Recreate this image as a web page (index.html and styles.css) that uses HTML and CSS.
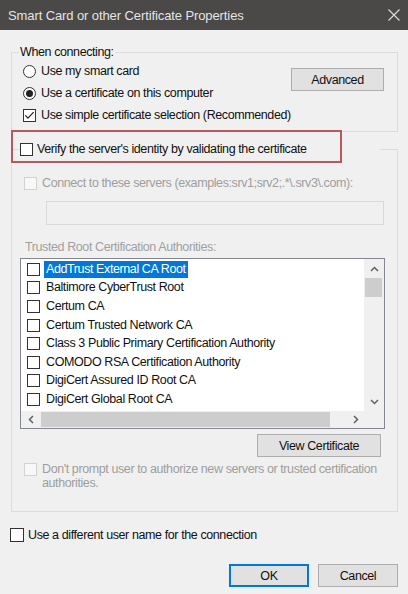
FILE: index.html
```html
<!DOCTYPE html>
<html>
  <head>
    <title>Smart Card or other Certificate Properties</title>
    <link rel="stylesheet" href="styles.css">
  </head>
  <body>
    <div class="dialog">
      <div class="title-bar">
        <span class="title-text">Smart Card or other Certificate Properties</span>
        <svg class="close-icon" viewBox="0 0 12 12" xmlns="http://www.w3.org/2000/svg">
          <path d="M0.5 0.5L11.5 11.5M11.5 0.5L0.5 11.5" />
        </svg>
      </div>

      <div class="dialog-body">
        <fieldset class="group connect-group">
          <legend class="group-label">When connecting:</legend>
          <div class="connect-row">
            <div class="connect-options">
              <div class="option"><span class="radio"></span>Use my smart card</div>
              <div class="option"><span class="radio checked"></span>Use a certificate on this computer</div>
              <div class="option">
                <span class="check">
                  <svg viewBox="0 0 13 13" xmlns="http://www.w3.org/2000/svg">
                    <path d="M2.3 6.3L5 9.2L10.6 3.2" />
                  </svg>
                </span>
                Use simple certificate selection (Recommended)
              </div>
            </div>
            <button class="win-button advanced-button">Advanced</button>
          </div>
        </fieldset>

        <fieldset class="group verify-group">
          <legend class="verify-legend">
            <span class="check"></span>
            <span class="verify-text">Verify the server's identity by validating the certificate</span>
            <span class="highlight-box"></span>
          </legend>

          <div class="option disabled servers-row">
            <span class="check"></span>
            Connect to these servers (examples:srv1;srv2;.*\.srv3\.com):
          </div>
          <div class="servers-input"></div>

          <div class="list-label">Trusted Root Certification Authorities:</div>
          <div class="ca-list">
            <div class="ca-items">
              <div class="ca-item"><span class="check"></span><span class="ca-name selected">AddTrust External CA Root</span></div>
              <div class="ca-item"><span class="check"></span><span class="ca-name">Baltimore CyberTrust Root</span></div>
              <div class="ca-item"><span class="check"></span><span class="ca-name">Certum CA</span></div>
              <div class="ca-item"><span class="check"></span><span class="ca-name">Certum Trusted Network CA</span></div>
              <div class="ca-item"><span class="check"></span><span class="ca-name">Class 3 Public Primary Certification Authority</span></div>
              <div class="ca-item"><span class="check"></span><span class="ca-name">COMODO RSA Certification Authority</span></div>
              <div class="ca-item"><span class="check"></span><span class="ca-name">DigiCert Assured ID Root CA</span></div>
              <div class="ca-item"><span class="check"></span><span class="ca-name">DigiCert Global Root CA</span></div>
            </div>
            <div class="v-scroll">
              <div class="scroll-arrow v-arrow">
                <svg viewBox="0 0 9 6" xmlns="http://www.w3.org/2000/svg"><path d="M1 5L4.5 1.5L8 5" /></svg>
              </div>
              <div class="v-thumb"></div>
              <div class="v-track"></div>
              <div class="scroll-arrow v-arrow">
                <svg viewBox="0 0 9 6" xmlns="http://www.w3.org/2000/svg"><path d="M1 1L4.5 4.5L8 1" /></svg>
              </div>
            </div>
            <div class="h-scroll">
              <div class="scroll-arrow h-arrow left-arrow">
                <svg viewBox="0 0 6 9" xmlns="http://www.w3.org/2000/svg"><path d="M5 1L1.5 4.5L5 8" /></svg>
              </div>
              <div class="h-thumb"></div>
              <div class="h-track"></div>
              <div class="scroll-arrow h-arrow right-arrow">
                <svg viewBox="0 0 6 9" xmlns="http://www.w3.org/2000/svg"><path d="M1 1L4.5 4.5L1 8" /></svg>
              </div>
            </div>
            <div class="scroll-corner"></div>
          </div>

          <div class="view-row">
            <button class="win-button view-button">View Certificate</button>
          </div>

          <div class="option disabled prompt-row">
            <span class="check"></span>
            <span class="prompt-text">Don't prompt user to authorize new servers or trusted certification authorities.</span>
          </div>
        </fieldset>

        <div class="option username-row">
          <span class="check"></span>
          Use a different user name for the connection
        </div>

        <div class="dialog-buttons">
          <button class="win-button ok-button">OK</button>
          <button class="win-button">Cancel</button>
        </div>
      </div>
    </div>
  </body>
</html>
```

FILE: styles.css
```css
body {
  margin: 0;
  width: 408px;
  height: 594px;
  overflow: hidden;
  background-color: #f0f0f0;
  font-family: "Liberation Sans", Arial, sans-serif;
  font-size: 12.5px;
  letter-spacing: -0.4px;
  color: #111111;
}
.dialog {
  display: flex;
  flex-direction: column;
  height: 594px;
}
.title-bar {
  height: 30px;
  flex-shrink: 0;
  display: flex;
  align-items: center;
  justify-content: space-between;
  padding: 0 8px;
  background-color: #4a4947;
}
.title-text {
  color: #e4e4e4;
  font-size: 13px;
  letter-spacing: -0.1px;
}
.close-icon {
  width: 12px;
  height: 12px;
  stroke: #dddddd;
  stroke-width: 1.1;
  fill: none;
}
.dialog-body {
  padding: 14px 10px 0 11px;
}

/* group boxes */
.group {
  margin: 0;
  border: 1px solid #dcdcdc;
  min-width: 0;
}
.connect-group {
  padding: 0 13px 5px 11px;
}
.group-label {
  margin-left: -4px;
  padding: 0 1px;
  line-height: 16px;
}
.connect-row {
  display: flex;
  justify-content: space-between;
  align-items: flex-start;
}
.option {
  display: flex;
  align-items: center;
  height: 22px;
  white-space: nowrap;
}
.radio {
  width: 13px;
  height: 13px;
  box-sizing: border-box;
  border: 1px solid #333333;
  border-radius: 50%;
  background-color: #ffffff;
  margin-right: 5px;
  display: flex;
  align-items: center;
  justify-content: center;
  flex-shrink: 0;
}
.radio.checked::after {
  content: "";
  width: 7px;
  height: 7px;
  border-radius: 50%;
  background-color: #222222;
}
.check {
  width: 13px;
  height: 13px;
  box-sizing: border-box;
  border: 1px solid #333333;
  background-color: #ffffff;
  margin-right: 5px;
  flex-shrink: 0;
  position: relative;
}
.check svg {
  position: absolute;
  left: -1px;
  top: -1px;
  width: 13px;
  height: 13px;
  fill: none;
  stroke: #222222;
  stroke-width: 1.2;
}
.win-button {
  height: 23px;
  padding: 0;
  font-family: inherit;
  font-size: 12.5px;
  letter-spacing: -0.4px;
  color: #111111;
  background-color: #e1e1e1;
  border: 1px solid #adadad;
  border-radius: 0;
}
.advanced-button {
  width: 93px;
  margin-top: 8px;
}

/* verify group */
.verify-group {
  margin-top: 8px;
  padding: 16px 12px 21px 8px;
}
.verify-legend {
  position: relative;
  display: flex;
  align-items: center;
  width: 360px;
  height: 18px;
  padding: 0;
}
.verify-legend .check {
  margin-right: 4px;
}
.verify-text {
  white-space: nowrap;
}
.highlight-box {
  position: absolute;
  left: -9px;
  top: -10px;
  width: 331px;
  height: 33px;
  box-sizing: border-box;
  border: 2px solid #b85a5c;
}
.option.disabled {
  color: #9e9e9e;
}
.option.disabled .check {
  border-color: #d2d2d2;
  background-color: #f8f8f8;
}
.servers-row {
  height: 18px;
  margin-left: 4px;
}
.servers-input {
  height: 24px;
  box-sizing: border-box;
  margin: 9px 1px 0 26px;
  border: 1px solid #d9d9d9;
  background-color: #f0f0f0;
}
.list-label {
  margin: 13px 0 0 5px;
  line-height: 18px;
  color: #a0a0a0;
}

/* certificate list */
.ca-list {
  margin-top: 2px;
  height: 171px;
  box-sizing: border-box;
  border: 1px solid #828790;
  background-color: #ffffff;
  display: grid;
  grid-template-columns: 1fr 20px;
  grid-template-rows: 152px 17px;
  overflow: hidden;
}
.ca-items {
  padding-top: 1px;
  overflow: hidden;
}
.ca-item {
  display: flex;
  align-items: center;
  height: 18.6px;
  white-space: nowrap;
}
.ca-item .check {
  margin: 0 4px 0 6px;
}
.ca-name {
  padding: 0 2px;
  line-height: 17px;
}
.ca-name.selected {
  background-color: #0078d7;
  color: #ffffff;
}
.v-scroll {
  display: flex;
  flex-direction: column;
  background-color: #f0f0f0;
}
.scroll-arrow {
  display: flex;
  align-items: center;
  justify-content: center;
  flex-shrink: 0;
}
.scroll-arrow svg {
  fill: none;
  stroke: #606060;
  stroke-width: 1.5;
}
.v-arrow {
  height: 19px;
}
.v-arrow svg {
  width: 9px;
  height: 6px;
}
.v-thumb {
  height: 19px;
  margin: 0 2px 0 1px;
  background-color: #cdcdcd;
}
.v-track {
  flex: 1;
}
.h-scroll {
  display: flex;
  background-color: #f0f0f0;
}
.h-arrow svg {
  width: 6px;
  height: 9px;
}
.left-arrow {
  width: 19px;
}
.right-arrow {
  width: 17px;
}
.h-thumb {
  width: 289px;
  margin: 1px 0 1px 1px;
  background-color: #cdcdcd;
}
.h-track {
  flex: 1;
}
.scroll-corner {
  background-color: #f0f0f0;
}

.view-row {
  display: flex;
  justify-content: flex-end;
  margin-top: 5px;
}
.view-button {
  width: 124px;
  margin-right: 4px;
}
.prompt-row {
  align-items: flex-start;
  height: auto;
  margin: 5px 0 0 4px;
  white-space: normal;
}
.prompt-row .check {
  margin-top: 1px;
}
.prompt-text {
  line-height: 14px;
  width: 340px;
}

.username-row {
  height: 18px;
  margin: 14px 0 0 -1px;
}
.username-row .check {
  width: 14px;
  height: 14px;
  margin-right: 4px;
}
.dialog-buttons {
  display: flex;
  justify-content: flex-end;
  gap: 9px;
  margin-top: 20px;
}
.dialog-buttons .win-button {
  width: 80px;
}
.ok-button {
  border: 2px solid #0078d7;
}
```
